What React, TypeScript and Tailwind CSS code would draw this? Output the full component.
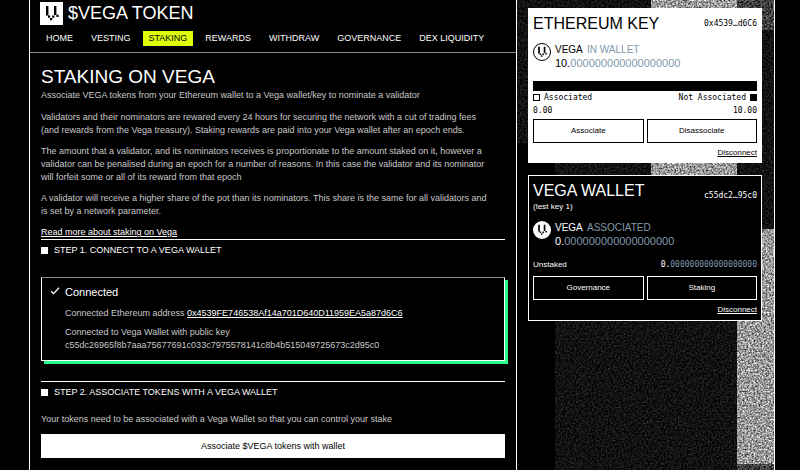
import React from "react";

const sans = "font-['Liberation_Sans',Arial,sans-serif]";
const mono = "font-['DejaVu_Sans_Mono',monospace]";

const navItems = ["HOME", "VESTING", "STAKING", "REWARDS", "WITHDRAW", "GOVERNANCE", "DEX LIQUIDITY"];

function VegaMark({ className }: { className: string }) {
  return (
    <svg viewBox="0 0 23 23" className={className} fill="currentColor" aria-hidden="true">
      <path d="M6 4h2.4v9.5H6zM14 4h2.4v9H14zM8 13.5h2.2v2.3H8zM12.2 13.5h2.2v2.3h-2.2zM10 16h2.3v2.3H10zM16.4 12.8h2.2V15h-2.2z" />
    </svg>
  );
}

function NoiseFilter({ id, gain, offset, seed }: { id: string; gain: number; offset: number; seed: number }) {
  const row = `${gain} 0 0 0 ${offset} `;
  return (
    <filter id={id} x="0" y="0" width="100%" height="100%" colorInterpolationFilters="sRGB">
      <feTurbulence type="fractalNoise" baseFrequency="0.57" numOctaves="3" seed={seed} />
      <feColorMatrix type="matrix" values={row + row + row + "0 0 0 0 1"} />
    </filter>
  );
}

function NoiseBackdrop() {
  return (
    <svg className="absolute inset-0 h-full w-full" aria-hidden="true">
      <defs>
        <NoiseFilter id="noise-dark" gain={0.36} offset={-0.11} seed={3} />
        <NoiseFilter id="noise-mid" gain={0.9} offset={-0.2} seed={5} />
        <NoiseFilter id="noise-light" gain={1.3} offset={-0.05} seed={8} />
      </defs>
      <rect x="0" y="0" width="38" height="143" filter="url(#noise-dark)" />
      <rect x="38" y="0" width="182" height="470" filter="url(#noise-dark)" />
      <rect x="134" y="0" width="86" height="176" filter="url(#noise-light)" />
      <rect x="220" y="0" width="37" height="30" filter="url(#noise-mid)" />
      <rect x="220" y="30" width="37" height="199" filter="url(#noise-dark)" />
      <rect x="220" y="229" width="37" height="235" filter="url(#noise-light)" />
      <rect x="220" y="464" width="37" height="40" filter="url(#noise-mid)" />
    </svg>
  );
}

function Step({ title, children }: { title: string; children: React.ReactNode }) {
  return (
    <section className="border-t border-white">
      <h2 className="flex items-center gap-[6px] pt-1 text-[9px] leading-[13px] text-white">
        <span className="size-[7px] bg-white" />
        {title}
      </h2>
      {children}
    </section>
  );
}

function Balance({ label, whole, decimals, dark }: { label: string; whole: string; decimals: string; dark?: boolean }) {
  return (
    <div className="flex items-start gap-1">
      <span
        className={
          dark
            ? "flex size-[18px] items-center justify-center rounded-full bg-white text-black"
            : "flex size-[18px] items-center justify-center rounded-full border border-black text-black"
        }
      >
        <VegaMark className="size-4" />
      </span>
      <div>
        <p className="text-[10px] leading-[13px]">
          VEGA <span className="ml-[2px] text-[#8199ab]">{label}</span>
        </p>
        <p className="text-[11px] leading-[15px]">
          {whole}.<span className="text-[#8199ab]">{decimals}</span>
        </p>
      </div>
    </div>
  );
}

function CardActions({ actions }: { actions: string[] }) {
  return (
    <>
      <div className="grid grid-cols-2 gap-[3px]">
        {actions.map((a) => (
          <button key={a} type="button" className="h-6 border border-current text-[8px]">
            {a}
          </button>
        ))}
      </div>
      <div className="flex justify-end pt-1">
        <a href="#disconnect" className="text-[8px] leading-[12px] underline">
          Disconnect
        </a>
      </div>
    </>
  );
}

export default function App() {
  return (
    <div className={`h-screen overflow-hidden bg-black pr-[25px] pl-[29px] text-white ${sans}`}>
      <div className="grid min-h-full grid-cols-[minmax(0,1fr)_259px] border-l border-white">
        <div>
          <header className="border-b border-[#8a8a8a] pt-[2px] pl-[10px]">
            <div className="flex items-center gap-[5px]">
              <span className="bg-white text-black">
                <VegaMark className="size-[23px]" />
              </span>
              <span className="text-[18px] leading-[23px]">$VEGA TOKEN</span>
            </div>
            <nav className="flex gap-[6px] pt-[6px] pb-[6px] text-[9px] leading-[15px]">
              {navItems.map((n) => (
                <a
                  key={n}
                  href="#"
                  className={n === "STAKING" ? "bg-[#dfff0b] px-[6px] text-black" : "px-[6px] text-white"}
                >
                  {n}
                </a>
              ))}
            </nav>
          </header>

          <main className="px-[11px] pt-[12px] text-[9px] leading-[13px] text-[#c8c8c8]">
            <h1 className="text-[19px] leading-[24px] text-white">STAKING ON VEGA</h1>
            <div className="pr-4">
              <p className="mb-[9px]">
                Associate VEGA tokens from your Ethereum wallet to a Vega wallet/key to nominate a validator
              </p>
              <p className="mb-2">
                Validators and their nominators are rewared every 24 hours for securing the network with a cut of
                trading fees (and rewards from the Vega treasury). Staking rewards are paid into your Vega wallet after
                an epoch ends.
              </p>
              <p className="mb-2">
                The amount that a validator, and its nominators receives is proportionate to the amount staked on it,
                however a validator can be penalised during an epoch for a number of reasons. In this case the
                validator and its nominator will forfeit some or all of its reward from that epoch
              </p>
              <p className="mb-2">
                A validator will receive a higher share of the pot than its nominators. This share is the same for all
                validators and is set by a network parameter.
              </p>
            </div>
            <p>
              <a href="#more" className="text-white underline">
                Read more about staking on Vega
              </a>
            </p>
            <Step title="STEP 1. CONNECT TO A VEGA WALLET">
              <div className="mt-5 mb-5 flex gap-[5px] border border-white border-t-[#8a8a8a] px-2 pt-[7px] pb-2 shadow-[3px_3px_0_#26ff8a]">
                <svg viewBox="0 0 10 10" className="mt-px size-[10px] text-white" fill="none" stroke="currentColor" strokeWidth="1.3" aria-hidden="true">
                  <path d="M1 5.2 3.6 7.6 9 1.8" />
                </svg>
                <div>
                  <h3 className="mb-2 text-[11px] leading-[14px] text-white">Connected</h3>
                  <p className="mb-[6px]">
                    Connected Ethereum address{" "}
                    <a href="#address" className="text-white underline">
                      0x4539FE746538Af14a701D640D11959EA5a87d6C6
                    </a>
                  </p>
                  <p>Connected to Vega Wallet with public key</p>
                  <p>c55dc26965f8b7aaa75677691c033c7975578141c8b4b515049725673c2d95c0</p>
                </div>
              </div>
            </Step>
            <Step title="STEP 2. ASSOCIATE TOKENS WITH A VEGA WALLET">
              <p className="mt-[14px] mb-2">
                Your tokens need to be associated with a Vega Wallet so that you can control your stake
              </p>
              <button type="button" className="h-6 w-full bg-white text-black">
                Associate $VEGA tokens with wallet
              </button>
            </Step>
          </main>
        </div>

        <aside className="relative border-x border-white">
          <NoiseBackdrop />
          <div className="relative flex flex-col gap-3 pt-2 pr-3 pl-[11px]">
            <section className="bg-white px-[5px] pt-1 pb-1 text-black">
              <div className="flex items-center justify-between">
                <h2 className="text-[16px] leading-[23px]">ETHEREUM KEY</h2>
                <span className={`text-[8px] ${mono}`}>0x4539…d6C6</span>
              </div>
              <div className="pt-2 pb-[10px]">
                <Balance label="IN WALLET" whole="10" decimals="000000000000000000" />
              </div>
              <div className="h-[10px] border border-black bg-black" />
              <div className={`text-[8px] leading-[13px] ${mono}`}>
                <div className="flex justify-between">
                  <span className="flex items-center gap-1">
                    <span className="size-[7px] border border-black" />
                    Associated
                  </span>
                  <span className="flex items-center gap-1">
                    Not Associated
                    <span className="size-[7px] bg-black" />
                  </span>
                </div>
                <div className="mb-[2px] flex justify-between">
                  <span>0.00</span>
                  <span>10.00</span>
                </div>
              </div>
              <CardActions actions={["Associate", "Disassociate"]} />
            </section>

            <section className="border border-white bg-black px-1 pt-1 pb-1">
              <div className="flex items-center justify-between">
                <div>
                  <h2 className="text-[16px] leading-[22px]">VEGA WALLET</h2>
                  <p className="text-[8px] leading-[10px]">(test key 1)</p>
                </div>
                <span className={`text-[8px] ${mono}`}>c55dc2…95c0</span>
              </div>
              <div className="pt-[9px] pb-[9px]">
                <Balance label="ASSOCIATED" whole="0" decimals="000000000000000000" dark />
              </div>
              <div className="flex items-center justify-between pb-[5px] text-[8px] leading-[13px]">
                <span>Unstaked</span>
                <span className={mono}>
                  0.<span className="text-[#8199ab]">000000000000000000</span>
                </span>
              </div>
              <CardActions actions={["Governance", "Staking"]} />
            </section>
          </div>
        </aside>
      </div>
    </div>
  );
}
